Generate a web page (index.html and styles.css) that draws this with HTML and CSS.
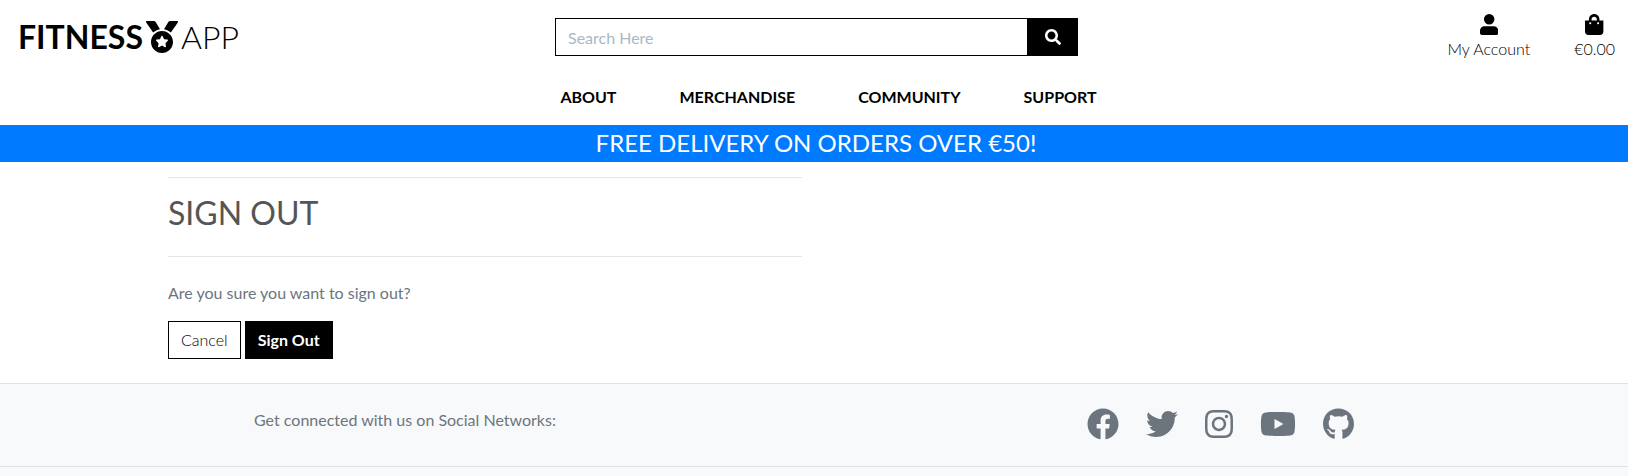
FILE: index.html
```
<!DOCTYPE html>
<html lang="en">
<head>
<meta charset="utf-8">
<meta name="viewport" content="width=device-width, initial-scale=1">
<title>Fitness App - Sign Out</title>
<link rel="stylesheet" href="styles.css">
</head>
<body>
<header>
  <div class="topbar">
    <a class="logo" href="#"><strong>FITNESS</strong><svg class="medal" viewBox="0 0 512 512" aria-hidden="true"><path d="M223.75 130.75L154.62 15.54A31.997 31.997 0 0 0 127.18 0H16.03C3.08 0-4.5 14.57 2.92 25.18l111.27 158.96c29.72-27.77 67.52-46.83 109.56-53.39zM495.97 0H384.82c-11.24 0-21.66 5.9-27.44 15.54l-69.13 115.21c42.04 6.56 79.84 25.62 109.56 53.38L509.08 25.18C516.5 14.57 508.92 0 495.97 0zM256 160c-97.2 0-176 78.8-176 176s78.8 176 176 176 176-78.8 176-176-78.8-176-176-176zm92.52 157.26l-37.93 36.96 8.97 52.22c1.6 9.36-8.26 16.51-16.65 12.09L256 393.88l-46.9 24.65c-8.4 4.45-18.25-2.74-16.65-12.09l8.97-52.22-37.93-36.96c-6.82-6.64-3.05-18.23 6.35-19.59l52.43-7.64 23.43-47.52c2.11-4.28 6.19-6.39 10.28-6.39 4.11 0 8.22 2.14 10.33 6.39l23.43 47.52 52.43 7.64c9.4 1.36 13.17 12.95 6.35 19.59z"/></svg><span>APP</span></a>
    <form class="search" role="search">
      <input type="text" placeholder="Search Here" aria-label="Search">
      <button type="submit" aria-label="Submit search"><svg viewBox="0 0 512 512" aria-hidden="true"><path d="M505 442.7L405.3 343c-4.5-4.5-10.6-7-17-7H372c27.6-35.3 44-79.7 44-128C416 93.1 322.9 0 208 0S0 93.1 0 208s93.1 208 208 208c48.3 0 92.7-16.4 128-44v16.3c0 6.4 2.5 12.5 7 17l99.7 99.7c9.4 9.4 24.6 9.4 33.9 0l28.3-28.3c9.4-9.4 9.4-24.6.1-34zM208 336c-70.7 0-128-57.2-128-128 0-70.7 57.2-128 128-128 70.7 0 128 57.2 128 128 0 70.7-57.2 128-128 128z"/></svg></button>
    </form>
    <div class="account">
      <a href="#"><svg viewBox="0 0 448 512" aria-hidden="true"><path d="M224 256A128 128 0 1 0 224 0a128 128 0 1 0 0 256zM112 296C50 296 0 346 0 408v56c0 26.500 21.500 48 48 48h352c26.500 0 48-21.500 48-48v-56c0-62-50-112-112-112z"/></svg><span>My Account</span></a>
      <a href="#"><svg viewBox="0 0 448 512" aria-hidden="true"><path d="M352 160v-32C352 57.42 294.579 0 224 0 153.42 0 96 57.42 96 128v32H0v272c0 44.183 35.817 80 80 80h288c44.183 0 80-35.817 80-80V160h-96zm-192-32c0-35.29 28.71-64 64-64s64 28.71 64 64v32H160v-32zm160 120c-13.255 0-24-10.745-24-24s10.745-24 24-24 24 10.745 24 24-10.745 24-24 24zm-192 0c-13.255 0-24-10.745-24-24s10.745-24 24-24 24 10.745 24 24-10.745 24-24 24z"/></svg><span>€0.00</span></a>
    </div>
  </div>
  <nav class="menu" aria-label="Main">
    <a href="#">ABOUT</a>
    <a href="#">MERCHANDISE</a>
    <a href="#">COMMUNITY</a>
    <a href="#">SUPPORT</a>
  </nav>
  <p class="banner">FREE DELIVERY ON ORDERS OVER €50!</p>
</header>
<main>
  <section class="panel">
    <h1>SIGN OUT</h1>
    <p>Are you sure you want to sign out?</p>
    <form class="actions">
      <a class="btn" href="#">Cancel</a>
      <button class="btn btn-dark" type="submit">Sign Out</button>
    </form>
  </section>
</main>
<footer>
  <div class="social">
    <p>Get connected with us on Social Networks:</p>
    <div class="links">
      <a href="#" aria-label="Facebook"><svg viewBox="0 0 512 512"><path d="M504 256C504 119 393 8 256 8S8 119 8 256c0 123.78 90.69 226.38 209.25 245V327.69h-63V256h63v-54.64c0-62.15 37-96.48 93.67-96.48 27.14 0 55.52 4.84 55.52 4.84v61h-31.28c-30.8 0-40.41 19.12-40.41 38.73V256h68.78l-11 71.69h-57.78V501C413.31 482.38 504 379.78 504 256z"/></svg></a>
      <a href="#" aria-label="Twitter"><svg viewBox="0 0 512 512"><path d="M459.37 151.716c.325 4.548.325 9.097.325 13.645 0 138.72-105.583 298.558-298.558 298.558-59.452 0-114.68-17.219-161.137-47.106 8.447.974 16.568 1.299 25.34 1.299 49.055 0 94.213-16.568 130.274-44.832-46.132-.975-84.792-31.188-98.112-72.772 6.498.974 12.995 1.624 19.818 1.624 9.421 0 18.843-1.3 27.614-3.573-48.081-9.747-84.143-51.98-84.143-102.985v-1.299c13.969 7.797 30.214 12.67 47.431 13.319-28.264-18.843-46.781-51.005-46.781-87.391 0-19.492 5.197-37.36 14.294-52.954 51.655 63.675 129.3 105.258 216.365 109.807-1.624-7.797-2.599-15.918-2.599-24.04 0-57.828 46.782-104.934 104.934-104.934 30.213 0 57.502 12.67 76.67 33.137 23.715-4.548 46.456-13.32 66.599-25.34-7.798 24.366-24.366 44.833-46.132 57.827 21.117-2.273 41.584-8.122 60.426-16.243-14.292 20.791-32.161 39.308-52.628 54.253z"/></svg></a>
      <a href="#" aria-label="Instagram"><svg viewBox="0 0 448 512"><path d="M224.1 141c-63.6 0-114.9 51.3-114.9 114.9s51.3 114.9 114.9 114.9S339 319.5 339 255.9 287.7 141 224.1 141zm0 189.6c-41.1 0-74.7-33.5-74.7-74.7s33.5-74.7 74.7-74.7 74.7 33.5 74.7 74.7-33.6 74.7-74.7 74.7zm146.4-194.3c0 14.9-12 26.8-26.8 26.8-14.9 0-26.8-12-26.8-26.8s12-26.8 26.8-26.8 26.8 12 26.8 26.8zm76.1 27.2c-1.7-35.9-9.9-67.7-36.2-93.9-26.2-26.2-58-34.4-93.9-36.2-37-2.1-147.9-2.1-184.9 0-35.8 1.7-67.6 9.9-93.9 36.1s-34.4 58-36.2 93.9c-2.1 37-2.1 147.9 0 184.9 1.7 35.9 9.9 67.7 36.2 93.9s58 34.4 93.9 36.2c37 2.1 147.9 2.1 184.9 0 35.9-1.7 67.7-9.9 93.9-36.2 26.2-26.2 34.4-58 36.2-93.9 2.1-37 2.1-147.8 0-184.8zM398.8 388c-7.8 19.6-22.9 34.7-42.6 42.6-29.5 11.7-99.5 9-132.1 9s-102.7 2.6-132.1-9c-19.6-7.8-34.7-22.9-42.6-42.6-11.7-29.5-9-99.5-9-132.1s-2.6-102.7 9-132.1c7.8-19.6 22.9-34.7 42.6-42.6 29.5-11.7 99.5-9 132.1-9s102.7-2.6 132.1 9c19.6 7.8 34.7 22.9 42.6 42.6 11.7 29.5 9 99.5 9 132.1s2.7 102.7-9 132.1z"/></svg></a>
      <a href="#" aria-label="YouTube"><svg viewBox="0 0 576 512"><path d="M549.655 124.083c-6.281-23.65-24.787-42.276-48.284-48.597C458.781 64 288 64 288 64S117.22 64 74.629 75.486c-23.497 6.322-42.003 24.947-48.284 48.597-11.412 42.867-11.412 132.305-11.412 132.305s0 89.438 11.412 132.305c6.281 23.65 24.787 41.5 48.284 47.821C117.22 448 288 448 288 448s170.78 0 213.371-11.486c23.497-6.321 42.003-24.171 48.284-47.821 11.412-42.867 11.412-132.305 11.412-132.305s0-89.438-11.412-132.305zm-317.51 213.508V175.185l142.739 81.205-142.739 81.201z"/></svg></a>
      <a href="#" aria-label="GitHub"><svg viewBox="0 0 496 512"><path d="M165.9 397.4c0 2-2.3 3.6-5.2 3.6-3.3.3-5.6-1.3-5.6-3.6 0-2 2.3-3.6 5.2-3.6 3-.3 5.6 1.3 5.6 3.6zm-31.1-4.5c-.7 2 1.3 4.3 4.3 4.9 2.6 1 5.6 0 6.2-2s-1.3-4.3-4.3-5.2c-2.6-.7-5.5.3-6.2 2.3zm44.2-1.7c-2.9.7-4.9 2.6-4.6 4.9.3 2 2.9 3.3 5.9 2.6 2.9-.7 4.9-2.6 4.6-4.6-.3-1.9-3-3.2-5.9-2.9zM244.8 8C106.1 8 0 113.3 0 252c0 110.9 69.8 205.8 169.5 239.2 12.8 2.3 17.3-5.6 17.3-12.1 0-6.2-.3-40.4-.3-61.4 0 0-70 15-84.7-29.8 0 0-11.4-29.1-27.8-36.6 0 0-22.9-15.7 1.6-15.4 0 0 24.9 2 38.6 25.8 21.9 38.6 58.6 27.5 72.9 20.9 2.3-16 8.8-27.1 16-33.7-55.9-6.2-112.3-14.3-112.3-110.5 0-27.5 7.6-41.3 23.6-58.9-2.6-6.5-11.1-33.3 2.6-67.9 20.9-6.5 69 27 69 27 20-5.6 41.5-8.5 62.8-8.5s42.8 2.9 62.8 8.5c0 0 48.1-33.6 69-27 13.7 34.7 5.2 61.4 2.6 67.9 16 17.7 25.8 31.5 25.8 58.9 0 96.5-58.9 104.2-114.8 110.5 9.2 7.9 17 22.9 17 46.4 0 33.7-.3 75.4-.3 83.6 0 6.5 4.6 14.4 17.3 12.1C428.2 457.8 496 362.9 496 252 496 113.3 383.5 8 244.8 8z"/></svg></a>
    </div>
  </div>
</footer>
</body>
</html>
```
FILE: styles.css
```
* {
  box-sizing: border-box;
}

body {
  margin: 0;
  min-height: 100vh;
  display: flex;
  flex-direction: column;
  font-family: Lato, "Open Sans", sans-serif;
  font-size: 16px;
  line-height: 24px;
  color: #000;
  background: #fff;
}

h1,
p {
  margin: 0;
}

a {
  color: inherit;
  text-decoration: none;
}

svg {
  display: block;
  fill: currentColor;
}

.topbar {
  display: grid;
  grid-template-columns: repeat(3, minmax(0, 1fr));
  gap: 20px;
  align-items: center;
  padding: 13px 7px 0 12px;
}

.logo {
  display: flex;
  align-items: center;
  padding-left: 6px;
  font-size: 32px;
  line-height: 48px;
  font-weight: 300;
}

.logo strong {
  font-weight: 700;
}

.medal {
  width: 32px;
  height: 32px;
  margin: 0 3px;
}

.search {
  display: flex;
}

.search input {
  flex: 1;
  min-width: 0;
  height: 38px;
  padding: 6px 12px;
  border: 1px solid #000;
  border-radius: 0;
  font: inherit;
  color: #000;
  background: #fff;
}

.search input::placeholder {
  color: #aab7c4;
  opacity: 1;
}

.search button {
  width: 50px;
  padding: 0;
  border: 0;
  display: grid;
  place-items: center;
  color: #fff;
  background: #000;
}

.search button svg {
  width: 16px;
  height: 16px;
}

.account {
  display: flex;
  justify-content: flex-end;
  gap: 44px;
  padding-right: 6px;
}

.account a {
  display: flex;
  flex-direction: column;
  align-items: center;
  font-weight: 300;
}

.account svg {
  height: 24px;
  padding: 1px 0 2px;
}

.menu {
  display: flex;
  justify-content: center;
  gap: 63px;
  padding: 24px 0 16px 29px;
  font-weight: 700;
}

.banner {
  padding: 3px 0 5px 4px;
  font-size: 24px;
  line-height: 29px;
  text-align: center;
  color: #fff;
  background: #007bff;
}

main {
  padding: 15px 166px 24px 168px;
}

.panel {
  width: 49%;
  color: #6c757d;
}

.panel h1 {
  padding: 16px 0 24px;
  border: solid #e5e5e5;
  border-width: 1px 0;
  font-size: 32px;
  line-height: 38px;
  font-weight: 400;
  color: #555;
}

.panel p {
  padding: 24px 0 16px;
}

.actions {
  display: flex;
  gap: 4px;
}

.btn {
  padding: 6px 12px;
  border: 1px solid #000;
  font: inherit;
  font-weight: 300;
  color: #000;
  background: #fff;
}

.btn-dark {
  font-weight: 700;
  color: #fff;
  background: #000;
}

footer {
  flex: 1;
  color: #6c757d;
  background: #f8f9fa;
}

.social {
  display: flex;
  justify-content: space-between;
  padding: 24px 274px 26px 254px;
  border: solid #dee2e6;
  border-width: 1px 0;
}

.links {
  display: flex;
  gap: 27px;
}

.links svg {
  height: 32px;
}
```
